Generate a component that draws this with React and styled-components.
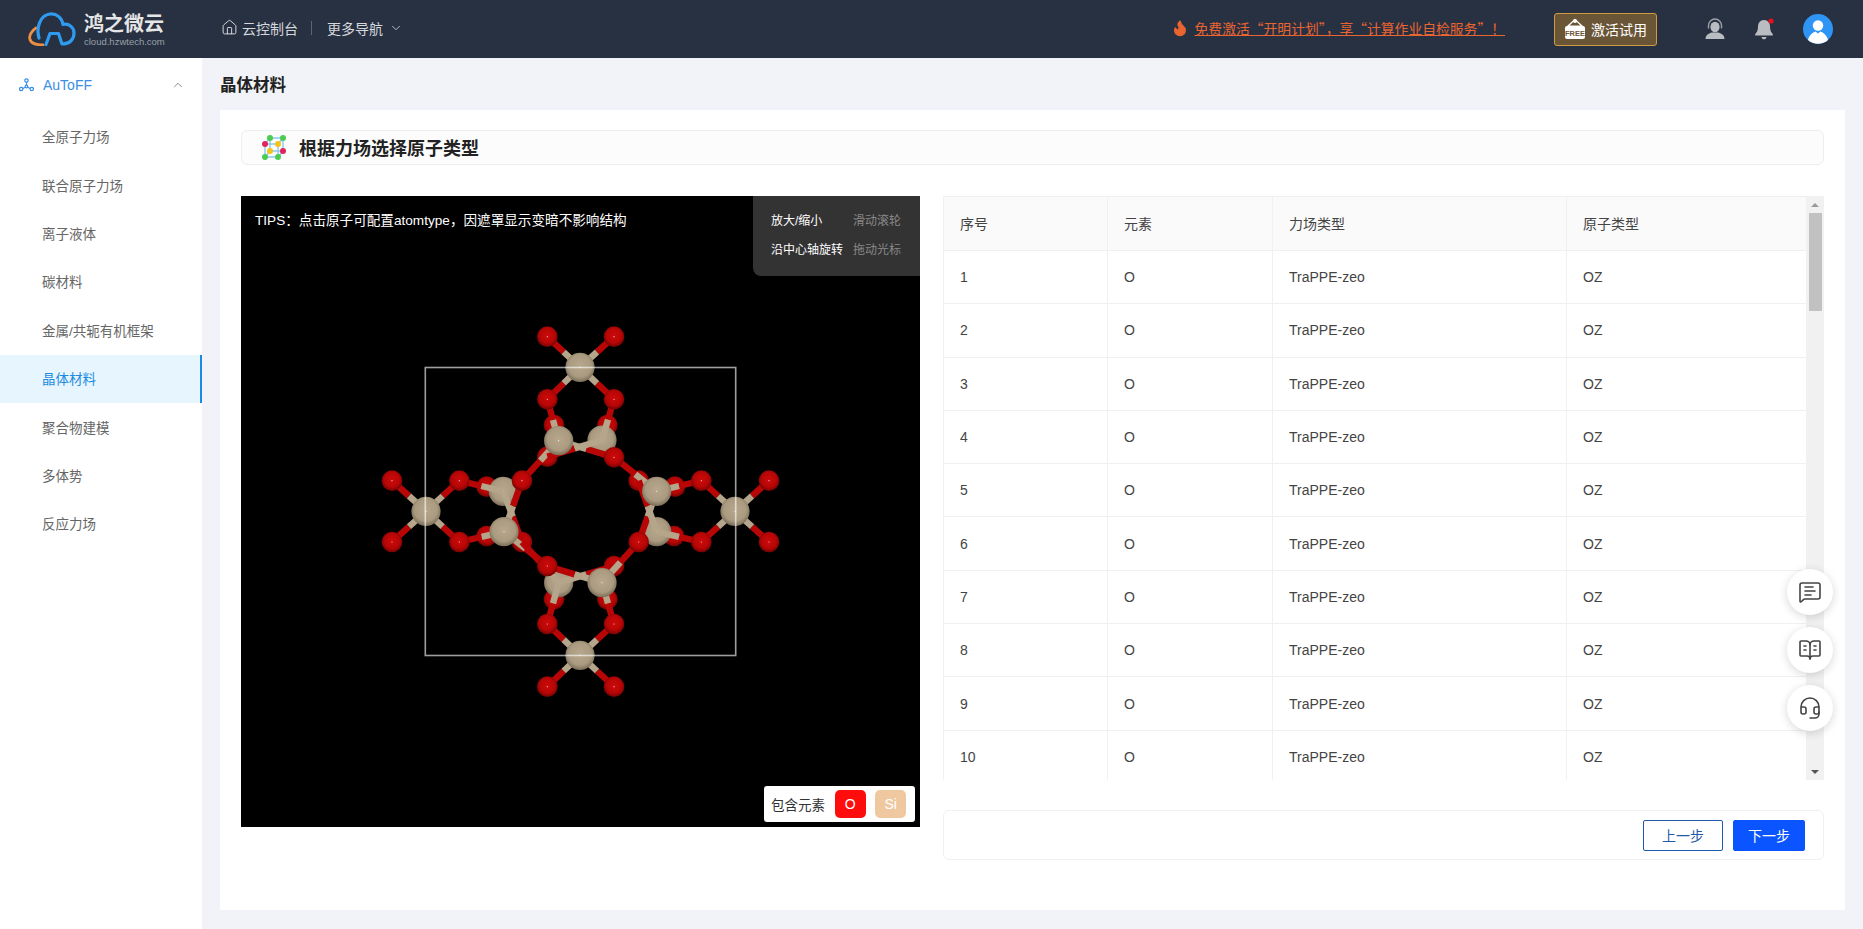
import styled, { createGlobalStyle } from "styled-components";
import {
  BookOpenText,
  ChevronDown,
  ChevronUp,
  Flame,
  Headset,
  House,
  MessageSquareText,
} from "lucide-react";

const GlobalStyle = createGlobalStyle`
  html, body {
    margin: 0;
    height: 100%;
    overflow: hidden;
    background: #f1f3f8;
    font-family: "Liberation Sans", "Noto Sans CJK SC", sans-serif;
    color: #333;
  }
  * { box-sizing: border-box; }
`;

const MENU = [
  "全原子力场",
  "联合原子力场",
  "离子液体",
  "碳材料",
  "金属/共轭有机框架",
  "晶体材料",
  "聚合物建模",
  "多体势",
  "反应力场",
];

const ROWS = Array.from({ length: 10 }, (_, i) => i + 1);

// atom positions read off the 3x crop, divided by 3 when drawn
const OX = 129;
const OY = 114;
const px = (x) => x / 3 + OX;
const py = (y) => y / 3 + OY;

const BACK_O = [
  [552, 345], [712, 345], [532, 440], [350, 530], [915, 530], [350, 678],
  [912, 678], [456, 696], [806, 512], [732, 768], [552, 868], [712, 868],
];
const FRONT_O = [
  [532, 80], [732, 80], [532, 268], [732, 268], [732, 442], [66, 512],
  [268, 512], [456, 512], [994, 512], [1197, 512], [66, 696], [268, 696],
  [806, 696], [994, 696], [1197, 696], [532, 768], [532, 942], [732, 942],
  [532, 1130], [732, 1130],
];
const BACK_SI = [[696, 390], [400, 544], [860, 665], [566, 818]];
const FRONT_SI = [
  [630, 172], [566, 392], [860, 544], [168, 604], [1095, 604], [402, 665],
  [696, 818], [630, 1036],
];
const BONDS = [
  [[630, 172], [[532, 80], [732, 80], [532, 268], [732, 268]]],
  [[630, 1036], [[532, 942], [732, 942], [532, 1130], [732, 1130]]],
  [[168, 604], [[66, 512], [66, 696], [268, 512], [268, 696]]],
  [[1095, 604], [[1197, 512], [1197, 696], [994, 512], [994, 696]]],
  [[566, 392], [[532, 268], [732, 442], [456, 512]]],
  [[696, 390], [[732, 268], [532, 440]]],
  [[860, 544], [[732, 442], [806, 696], [994, 512]]],
  [[860, 665], [[994, 696], [806, 512]]],
  [[400, 544], [[268, 512], [456, 696]]],
  [[402, 665], [[268, 696], [456, 512], [532, 768]]],
  [[566, 818], [[732, 768], [456, 696], [532, 942]]],
  [[696, 818], [[532, 768], [806, 696], [732, 942]]],
];

const Atom = ({ at, si }) => (
  <>
    <circle
      cx={px(at[0])}
      cy={py(at[1])}
      r={si ? 14.6 : 10.3}
      fill={si ? "url(#siBall)" : "url(#oBall)"}
    />
    <circle cx={px(at[0])} cy={py(at[1])} r="0.6" fill="#fff" opacity="0.8" />
  </>
);

const Molecule = () => (
  <MoleculeSvg viewBox="0 0 679 631">
    <defs>
      <radialGradient id="oBall" cx="50%" cy="45%" r="55%">
        <stop offset="0%" stopColor="#cc0a0a" />
        <stop offset="65%" stopColor="#b80606" />
        <stop offset="100%" stopColor="#720303" />
      </radialGradient>
      <radialGradient id="siBall" cx="50%" cy="45%" r="55%">
        <stop offset="0%" stopColor="#b8a78d" />
        <stop offset="70%" stopColor="#a99a80" />
        <stop offset="100%" stopColor="#7a6e58" />
      </radialGradient>
    </defs>
    {BACK_O.map((a) => <Atom key={a.join()} at={a} />)}
    {BACK_SI.map((a) => <Atom key={a.join()} at={a} si />)}
    {BONDS.flatMap(([si, list]) =>
      list.map((o) => {
        const mx = (si[0] + o[0]) / 2;
        const my = (si[1] + o[1]) / 2;
        return (
          <g key={si.join() + o.join()} strokeWidth="6.4">
            <line x1={px(o[0])} y1={py(o[1])} x2={px(mx)} y2={py(my)} stroke="#b80606" />
            <line x1={px(si[0])} y1={py(si[1])} x2={px(mx)} y2={py(my)} stroke="#b5a58b" />
          </g>
        );
      })
    )}
    {FRONT_O.map((a) => <Atom key={a.join()} at={a} />)}
    {FRONT_SI.map((a) => <Atom key={a.join()} at={a} si />)}
    <rect
      x="184.3"
      y="171.5"
      width="310.4"
      height="288"
      fill="none"
      stroke="#fff"
      strokeOpacity="0.62"
      strokeWidth="1.6"
    />
  </MoleculeSvg>
);

const Logo = () => (
  <svg width="48" height="34" viewBox="0 0 48 34" fill="none" strokeLinecap="round" strokeLinejoin="round">
    <path d="M8 16C3 19 .8 24 2 27.500 3 31 8 33 15 33" stroke="#ea8f45" strokeWidth="2.800" />
    <path
      d="M11 26C8 16 12 3 22 2c7-.5 12 4 13 10.500C41 11 46 15.500 46 21c0 6-4 11-12 11L30.500 21.500H22L18 32.500"
      stroke="#2f9bf0"
      strokeWidth="3.200"
    />
  </svg>
);

const TitleIcon = () => (
  <svg width="26" height="26" viewBox="0 0 26 26" fill="none">
    <g stroke="#8cc8f0" strokeWidth="1.4">
      <path d="M9 4h13v13M22 17H9V4M4 10h13v13H4zM4 10l5-6M17 10l5-6M17 23l5-6M4 23l5-6" />
    </g>
    <circle cx="9" cy="4" r="3" fill="#4ccb52" />
    <circle cx="22" cy="4" r="3" fill="#4ccb52" />
    <circle cx="4" cy="10" r="3" fill="#e2245c" />
    <circle cx="17" cy="10" r="3" fill="#f6c21c" />
    <circle cx="9" cy="17" r="3" fill="#f6c21c" />
    <circle cx="22" cy="17" r="3" fill="#e2245c" />
    <circle cx="4" cy="23" r="3" fill="#4ccb52" />
    <circle cx="17" cy="23" r="3" fill="#4ccb52" />
  </svg>
);

const NetworkIcon = () => (
  <svg width="15" height="14" viewBox="0 0 15 14" fill="none" stroke="#3a8ee6" strokeWidth="1.2">
    <circle cx="7.500" cy="2.500" r="1.700" />
    <circle cx="2.200" cy="11" r="1.700" />
    <circle cx="12.800" cy="11" r="1.700" />
    <circle cx="7.500" cy="8.500" r="1.300" />
    <path d="M7.500 4.200v3M6.300 9.300 3.800 10.500M8.700 9.300l2.500 1.200" />
  </svg>
);

const FreeSign = () => (
  <svg width="22" height="22" viewBox="0 0 22 22">
    <path d="M11 1.500 4 8h14z" fill="none" stroke="#fff" strokeWidth="1.2" />
    <circle cx="11" cy="3" r="2" fill="#fff" />
    <rect x="1" y="8" width="20" height="13" rx="2" fill="#fff" />
    <text x="11" y="17.500" textAnchor="middle" fontSize="7.500" fontWeight="700" fill="#6b5537" fontFamily="Liberation Sans, sans-serif">
      FREE
    </text>
  </svg>
);

const AgentIcon = () => (
  <svg width="20" height="22" viewBox="0 0 20 22">
    <path d="M.5 21c0-3.600 3-5.600 6-6.500h7c3 .9 6 2.900 6 6.500z" fill="#b9bcc0" />
    <ellipse cx="10" cy="9" rx="4.600" ry="5.200" fill="#b9bcc0" />
    <path d="M3.500 10.500V7.500a6.500 6.500 0 0 1 13 0v3" fill="none" stroke="#9ba0a6" strokeWidth="1.400" />
  </svg>
);

const BellIcon = () => (
  <svg width="22" height="24" viewBox="0 0 22 24">
    <path d="M11 3c-4 0-6 3-6 6.500 0 4-1.200 6-2.800 7.500v1.500h17.600V17C18.200 15.500 17 13.500 17 9.500 17 6 15 3 11 3z" fill="#b9bcc0" />
    <path d="M8.500 20h5c-.3 1.500-1.200 2.300-2.500 2.300S8.800 21.500 8.500 20z" fill="#b9bcc0" />
    <circle cx="18" cy="4" r="2.600" fill="#e8101c" />
  </svg>
);

const AvatarIcon = () => (
  <svg width="30" height="30" viewBox="0 0 30 30">
    <circle cx="15" cy="15" r="15" fill="#2f95f5" />
    <circle cx="15" cy="11.500" r="5.200" fill="#fff" />
    <path d="M5 26c1-5 5-7.500 7.500-8.500l2.500 2 2.500-2c2.500 1 6.500 3.500 7.500 8.500a15 15 0 0 1-20 0z" fill="#fff" />
  </svg>
);

export default function App() {
  return (
    <Page>
      <GlobalStyle />
      <TopBar>
        <Brand>
          <Logo />
          <BrandText>
            <BrandName>鸿之微云</BrandName>
            <BrandUrl>cloud.hzwtech.com</BrandUrl>
          </BrandText>
        </Brand>
        <NavLink $first>
          <House size={17} strokeWidth={1.4} />
          云控制台
        </NavLink>
        <NavDivider />
        <NavLink>
          更多导航
          <ChevronDown size={14} strokeWidth={1.4} />
        </NavLink>
        <Promo>
          <Flame size={18} fill="#ea6430" color="#ea6430" />
          <a href="/">免费激活“开明计划”，享“计算作业自检服务”！</a>
        </Promo>
        <FreeButton>
          <FreeSign />
          激活试用
        </FreeButton>
        <TopIcons>
          <AgentIcon />
          <BellIcon />
          <AvatarIcon />
        </TopIcons>
      </TopBar>

      <Body>
        <Sidebar>
          <MenuHead>
            <NetworkIcon />
            <span>AuToFF</span>
            <ChevronUp size={14} strokeWidth={1.3} color="#666" />
          </MenuHead>
          {MENU.map((name) => (
            <MenuItem key={name} $active={name === "晶体材料"}>
              {name}
            </MenuItem>
          ))}
        </Sidebar>

        <Main>
          <PageTitle>晶体材料</PageTitle>
          <Card>
            <SectionBar>
              <TitleIcon />
              <h2>根据力场选择原子类型</h2>
            </SectionBar>
            <Columns>
              <Viewer>
                <Molecule />
                <Tips>TIPS：点击原子可配置atomtype，因遮罩显示变暗不影响结构</Tips>
                <HelpPanel>
                  <span>放大/缩小</span>
                  <em>滑动滚轮</em>
                  <span>沿中心轴旋转</span>
                  <em>拖动光标</em>
                </HelpPanel>
                <Legend>
                  包含元素
                  <ElementTag $color="#ff0d0d">O</ElementTag>
                  <ElementTag $color="#f0c8a0">Si</ElementTag>
                </Legend>
              </Viewer>

              <RightPane>
                <TablePane>
                  <TableWrap>
                    <Table>
                      <colgroup>
                        <col width="165" />
                        <col width="165" />
                        <col width="294" />
                        <col />
                      </colgroup>
                      <thead>
                        <tr>
                          <th>序号</th>
                          <th>元素</th>
                          <th>力场类型</th>
                          <th>原子类型</th>
                        </tr>
                      </thead>
                      <tbody>
                        {ROWS.map((n) => (
                          <tr key={n}>
                            <td>{n}</td>
                            <td>O</td>
                            <td>TraPPE-zeo</td>
                            <td>OZ</td>
                          </tr>
                        ))}
                      </tbody>
                    </Table>
                  </TableWrap>
                  <ScrollRail>
                    <ScrollArrow />
                    <ScrollThumb />
                    <ScrollArrow $down />
                  </ScrollRail>
                </TablePane>
                <Footer>
                  <StepButton>上一步</StepButton>
                  <StepButton $primary>下一步</StepButton>
                </Footer>
              </RightPane>
            </Columns>
          </Card>
        </Main>
      </Body>

      <FloatDock>
        <FloatButton><MessageSquareText size={24} strokeWidth={1.6} /></FloatButton>
        <FloatButton><BookOpenText size={24} strokeWidth={1.6} /></FloatButton>
        <FloatButton><Headset size={24} strokeWidth={1.6} /></FloatButton>
      </FloatDock>
    </Page>
  );
}

/********************* styled component *************************/
const Page = styled.div`
  display: flex;
  flex-direction: column;
  height: 929px;
`;

const TopBar = styled.header`
  display: flex;
  align-items: center;
  flex: 0 0 58px;
  padding: 0 30px 0 28px;
  background: #273142;
  color: #d5d8dc;
  font-size: 14px;
`;

const Brand = styled.div`
  display: flex;
  align-items: center;
  gap: 8px;
  width: 193px;
`;

const BrandText = styled.div`
  display: flex;
  flex-direction: column;
  width: 82px;
`;

const BrandName = styled.div`
  font-size: 20px;
  line-height: 24px;
  font-weight: 700;
  color: #e6e6e6;
`;

const BrandUrl = styled.div`
  font-size: 9.500px;
  line-height: 11px;
  color: #9aa0a8;
  white-space: nowrap;
`;

const NavLink = styled.div`
  display: flex;
  align-items: center;
  gap: ${(p) => (p.$first ? "4px" : "6px")};
  margin-bottom: 3px;
  font-size: 14px;
  white-space: nowrap;
`;

const NavDivider = styled.div`
  width: 1px;
  height: 14px;
  margin: 0 15px 2px 13px;
  background: #5c6572;
`;

const Promo = styled.div`
  display: flex;
  align-items: center;
  gap: 6px;
  margin-left: auto;
  margin-right: 49px;
  margin-bottom: 2px;
  color: #ea6430;
  font-family: "Noto Sans CJK SC", sans-serif;
  font-size: 13.800px;

  a {
    color: #ea6430;
    text-decoration: underline;
    white-space: nowrap;
  }
`;

const FreeButton = styled.button`
  display: flex;
  align-items: center;
  justify-content: center;
  gap: 5px;
  width: 103px;
  height: 33px;
  padding: 0;
  border: 1px solid #d09a45;
  border-radius: 3px;
  background: #6b5537;
  color: #fff;
  font: inherit;
  white-space: nowrap;
`;

const TopIcons = styled.div`
  display: flex;
  align-items: center;
  gap: 28px;
  margin-left: 48px;
`;

const Body = styled.div`
  display: flex;
  flex: 1;
  min-height: 0;
`;

const Sidebar = styled.aside`
  flex: 0 0 202px;
  background: #fff;
`;

const MenuHead = styled.div`
  display: flex;
  align-items: center;
  height: 55px;
  padding: 0 0 2px 19px;
  color: #3a8ee6;
  font-size: 14px;

  span {
    margin-left: 9px;
    width: 128px;
  }
`;

const MenuItem = styled.div`
  display: flex;
  align-items: center;
  height: 48.400px;
  padding: 0 0 2px 42px;
  font-size: 13.500px;
  color: ${(p) => (p.$active ? "#1d8ce0" : "#666")};
  background: ${(p) => (p.$active ? "#e6f5fe" : "transparent")};
  border-right: 2px solid ${(p) => (p.$active ? "#1d8ce0" : "transparent")};
`;

const Main = styled.main`
  display: flex;
  flex-direction: column;
  flex: 1;
  min-width: 0;
  padding: 0 18px 19px;
`;

const PageTitle = styled.h1`
  flex: 0 0 52px;
  margin: 0;
  padding-top: 1px;
  font-size: 16.500px;
  line-height: 52px;
  font-weight: 700;
  color: #222;
  min-height: 0;
`;

const Card = styled.section`
  flex: 1;
  padding: 20px 21px;
  background: #fff;
`;

const SectionBar = styled.div`
  display: flex;
  align-items: center;
  gap: 12px;
  height: 35px;
  padding: 0 0 2px 19px;
  border: 1px solid #eeeeee;
  border-radius: 6px;
  background: #fcfcfc;

  h2 {
    margin: 0;
    font-size: 18px;
    font-weight: 700;
    color: #222;
  }
`;

const Columns = styled.div`
  display: flex;
  gap: 23px;
  margin-top: 31px;
`;

const Viewer = styled.div`
  position: relative;
  flex: 0 0 679px;
  height: 631px;
  background: #000;
  overflow: hidden;
`;

const MoleculeSvg = styled.svg`
  display: block;
  width: 679px;
  height: 631px;
`;

const Tips = styled.div`
  position: absolute;
  top: 16px;
  left: 14px;
  font-size: 13.600px;
  line-height: 17px;
  color: #fff;
`;

const HelpPanel = styled.div`
  position: absolute;
  top: 0;
  right: 0;
  display: grid;
  grid-template-columns: 82px auto;
  grid-auto-rows: 29px;
  align-items: center;
  width: 167px;
  height: 80px;
  padding: 9px 18px 0;
  border-radius: 0 0 0 8px;
  background: #333;
  font-size: 12px;
  color: #fff;

  span { white-space: nowrap; }

  em {
    font-style: normal;
    color: #888;
    white-space: nowrap;
  }
`;

const Legend = styled.div`
  position: absolute;
  right: 5px;
  bottom: 5px;
  display: flex;
  align-items: center;
  gap: 9.600px;
  width: 151px;
  height: 36px;
  padding-left: 7px;
  border-radius: 3px;
  background: #fff;
  font-size: 13.500px;
  color: #333;
  white-space: nowrap;
`;

const ElementTag = styled.span`
  display: flex;
  align-items: center;
  justify-content: center;
  flex: 0 0 31px;
  height: 28px;
  border-radius: 5px;
  background: ${(p) => p.$color};
  color: #fff;
  font-size: 14px;
`;

const RightPane = styled.div`
  display: flex;
  flex-direction: column;
  flex: 1;
  min-width: 0;
  gap: 30px;
`;

const TablePane = styled.div`
  display: flex;
  height: 584px;
`;

const TableWrap = styled.div`
  flex: 1;
  min-width: 0;
  overflow: hidden;
  background: #fff;
`;

const ScrollRail = styled.div`
  display: flex;
  flex-direction: column;
  flex: 0 0 18px;
  background: #f1f1f1;
`;

const ScrollArrow = styled.div`
  display: flex;
  align-items: center;
  justify-content: center;
  flex: 0 0 17px;
  margin-top: ${(p) => (p.$down ? "auto" : "0")};

  &::before {
    content: "";
    border-left: 4px solid transparent;
    border-right: 4px solid transparent;
    border-bottom: ${(p) => (p.$down ? "0" : "4px solid #999")};
    border-top: ${(p) => (p.$down ? "4px solid #555" : "0")};
  }
`;

const ScrollThumb = styled.div`
  width: 13px;
  height: 98px;
  margin-left: 3px;
  background: #c1c1c1;
`;

const Table = styled.table`
  width: 100%;
  table-layout: fixed;
  border-collapse: separate;
  border-spacing: 0;
  font-size: 14px;
  color: #444;

  th,
  td {
    padding: 0 16px;
    border-bottom: 1px solid #f0f0f0;
    border-right: 1px solid #f0f0f0;
    text-align: left;
    font-weight: 400;
  }

  th:first-child,
  td:first-child {
    border-left: 1px solid #f0f0f0;
  }

  th:last-child,
  td:last-child {
    border-right: none;
  }

  th {
    height: 55px;
    padding-bottom: 2px;
    border-top: 1px solid #f0f0f0;
    background: #fafafa;
  }

  td {
    height: 53.300px;
  }
`;

const Footer = styled.div`
  display: flex;
  align-items: center;
  justify-content: flex-end;
  gap: 10px;
  height: 50px;
  padding-right: 18px;
  border: 1px solid #f0f0f0;
  border-radius: 6px;
`;

const StepButton = styled.button`
  width: ${(p) => (p.$primary ? "72px" : "80px")};
  height: 31px;
  padding: 0;
  border: 1px solid ${(p) => (p.$primary ? "#0a55ff" : "#1f5aa8")};
  border-radius: 2px;
  background: ${(p) => (p.$primary ? "#0a55ff" : "#fff")};
  color: ${(p) => (p.$primary ? "#fff" : "#1f5aa8")};
  font: inherit;
  font-size: 14px;
`;

const FloatDock = styled.div`
  position: fixed;
  top: 569px;
  right: 30px;
  display: flex;
  flex-direction: column;
  gap: 12px;
`;

const FloatButton = styled.div`
  display: flex;
  align-items: center;
  justify-content: center;
  width: 46px;
  height: 46px;
  border-radius: 50%;
  background: #fff;
  color: #444;
  box-shadow: 0 2px 10px rgba(0, 0, 0, 0.16);
`;
